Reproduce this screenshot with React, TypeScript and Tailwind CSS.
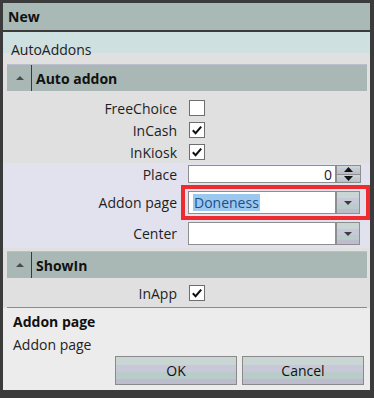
import React from "react";

const F = "font-['Open_Sans','Noto_Sans',sans-serif]";

function Check({ checked }: { checked: boolean }) {
  return (
    <div className="w-[16px] h-[16px] border border-[#6e6e6e] bg-white flex items-center justify-center">
      {checked && (
        <svg width="12" height="12" viewBox="0 0 12 12">
          <path d="M1.8 6.3 L4.6 9.2 L10.2 2.6" stroke="#111" strokeWidth="2" fill="none" />
        </svg>
      )}
    </div>
  );
}

function Arrow({ up }: { up: boolean }) {
  return (
    <svg width="9" height="5" viewBox="0 0 9 5">
      {up ? <path d="M0 5 L4.5 0 L9 5 Z" fill="#111" /> : <path d="M0 0 L9 0 L4.5 5 Z" fill="#111" />}
    </svg>
  );
}

const btnBg =
  "bg-[linear-gradient(#c9d6d4_0,#c9d6d4_30%,#c8c8da_30%,#c8c8da_55%,#b9ccc9_55%,#b9ccc9_80%,#bcbccc_80%)]";

function DropButton() {
  return (
    <div className={`w-[24px] h-full border border-[#8e8e8e] ${btnBg} flex items-center justify-center`}>
      <svg width="8" height="4" viewBox="0 0 8 4">
        <path d="M0 0 L8 0 L4 4 Z" fill="#3c3c3c" />
      </svg>
    </div>
  );
}

function Header({ title }: { title: string }) {
  return (
    <div className="ml-[4px] mr-[3px] h-[27px] bg-[#a9b8b5] border-t border-[#bdbdd0] flex items-stretch">
      <div className="w-[24px] flex items-center justify-center pl-[2px]">
        <svg width="8" height="4" viewBox="0 0 8 4">
          <path d="M0 4 L4 0 L8 4 Z" fill="#4a4a4a" />
        </svg>
      </div>
      <div className="w-[1px] bg-[#3a3a3a]" />
      <div className="pl-[4px] flex items-center font-bold text-[14px] leading-[19px] text-[#111]">{title}</div>
    </div>
  );
}

function Label({ children }: { children: React.ReactNode }) {
  return <div className="w-[174px] text-right text-[14px] leading-[19px] text-[#1e1e1e]">{children}</div>;
}

export default function App() {
  return (
    <div className={`${F} w-[374px] h-[398px] bg-[#3b3b3b] pt-[3px] pl-[3px] pr-[4px] pb-[8px] flex flex-col`}>
      <div className="h-[27px] bg-[#a9b9b6] flex items-center pl-[5px] font-bold text-[14px] leading-[19px] text-[#111]">
        New
      </div>
      <div className="h-[2px]" />
      <div className="flex-1 bg-[#e0e0e0] flex flex-col">
        <div className="h-[32px] bg-[linear-gradient(#cee0e0_0,#cee0e0_21px,#e0e0e0_21px)] pl-[8px] pt-[8px] text-[14px] leading-[19px] text-[#222]">
          AutoAddons
        </div>
        <Header title="Auto addon" />
        <div className="pt-[6px]">
          <div className="flex items-center h-[22px]">
            <Label>FreeChoice</Label>
            <div className="ml-[12px]"><Check checked={false} /></div>
          </div>
          <div className="flex items-center h-[22px]">
            <Label>InCash</Label>
            <div className="ml-[12px]"><Check checked={true} /></div>
          </div>
          <div className="flex items-center h-[22px]">
            <Label>InKiosk</Label>
            <div className="ml-[12px]"><Check checked={true} /></div>
          </div>
        </div>
        <div className="bg-[#e2e2ee] pb-[3px]">
          <div className="flex items-center h-[22px]">
            <Label>Place</Label>
            <div className="ml-[11px] h-[18px] flex">
              <div className="w-[148px] h-full bg-white border border-[#8e8e8e] flex items-center justify-end pr-[3px] text-[14px] leading-[19px] text-[#1a1a2a]">
                0
              </div>
              <div className="w-[25px] h-full flex flex-col">
                <div className={`flex-1 border border-[#8e8e8e] ${btnBg} flex items-center justify-center`}>
                  <Arrow up={true} />
                </div>
                <div className={`flex-1 border border-t-0 border-[#8e8e8e] ${btnBg} flex items-center justify-center`}>
                  <Arrow up={false} />
                </div>
              </div>
            </div>
          </div>
          <div className="relative flex items-start h-[35px]">
            <div className="mt-[8px]"><Label>Addon page</Label></div>
            <div className="ml-[11px] mt-[6px] h-[23px] flex w-[172px]">
              <div className="flex-1 h-full bg-white border border-[#8e8e8e] flex items-center pl-[4px]">
                <span className="bg-[#9cc8ee] text-[#1b4f8c] text-[14px] leading-[17px] px-[1px]">Doneness</span>
              </div>
              <DropButton />
            </div>
            <div className="absolute left-[178px] top-0 w-[189px] h-[35px] border-[4px] border-[#ee2b2f]" />
          </div>
          <div className="flex items-start h-[25px]">
            <div className="mt-[4px]"><Label>Center</Label></div>
            <div className="ml-[11px] mt-[2px] h-[23px] flex w-[172px]">
              <div className="flex-1 h-full bg-white border border-[#8e8e8e]" />
              <DropButton />
            </div>
          </div>
        </div>
        <div className="h-[3px]" />
        <Header title="ShowIn" />
        <div className="pt-[4px] pb-[3px]">
          <div className="flex items-center h-[22px]">
            <Label>InApp</Label>
            <div className="ml-[12px]"><Check checked={true} /></div>
          </div>
        </div>
        <div className="ml-[4px] mr-[3px] h-[1px] bg-[#8a8a9c]" />
        <div className="flex-1 bg-[#ececec] flex flex-col pl-[10px] pr-[6px]">
          <div className="mt-[4px] font-bold text-[14px] leading-[19px] text-[#111]">Addon page</div>
          <div className="mt-[4px] text-[14px] leading-[19px] text-[#222]">Addon page</div>
          <div className="mt-[2px] flex justify-end gap-[5px]">
            <div className={`w-[122px] h-[29px] border border-[#8a8a8a] ${btnBg} flex items-center justify-center text-[14px] leading-[19px] text-[#111]`}>
              OK
            </div>
            <div className={`w-[122px] h-[29px] border border-[#8a8a8a] ${btnBg} flex items-center justify-center text-[14px] leading-[19px] text-[#111]`}>
              Cancel
            </div>
          </div>
        </div>
      </div>
    </div>
  );
}
